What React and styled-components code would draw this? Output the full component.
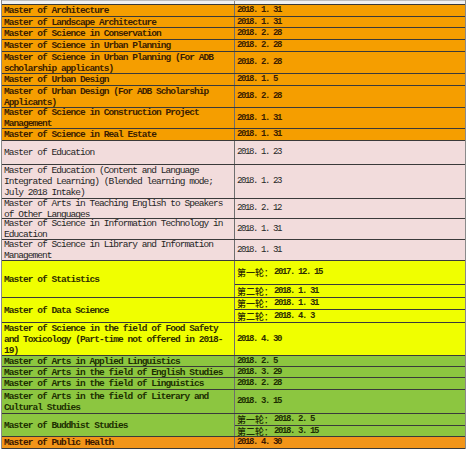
import React from "react"
import styled, { createGlobalStyle } from "styled-components"

const GlobalStyle = createGlobalStyle`
    body {
        margin: 0;
        background: #ffffff;
        font-family: "Liberation Mono", "Noto Sans CJK SC", monospace;
    }
`

const tones = {
    orange: { bg: "#f59e00", fg: "#3b1d00", weight: 700 },
    pink: { bg: "#f2dcdc", fg: "#262626", weight: 400 },
    yellow: { bg: "#f0ff00", fg: "#2e2e00", weight: 700 },
    green: { bg: "#8cc640", fg: "#1c2e00", weight: 700 },
    deep: { bg: "#f29519", fg: "#3b1800", weight: 700 },
}

const Sheet = styled.div`
    width: 463px;
    margin-left: 1px;
    border-left: 1px solid #8a8a8a;
    border-right: 1px solid #8a8a8a;
`
const TopStrip = styled.div`
    display: grid;
    grid-template-columns: 233px 1fr;
    height: 3px;
    background: #f1f1f1;
    border-top: 1px solid #bdbdbd;
    border-bottom: 1px solid #3a3a3a;
    span:first-child {
        border-right: 1px solid #8a8a8a;
    }
`
const Row = styled.div`
    display: grid;
    grid-template-columns: 233px 1fr;
    height: ${p => p.$h}px;
    box-sizing: border-box;
    border-bottom: 1px solid #3a3a3a;
    background: ${p => tones[p.$tone].bg};
    color: ${p => tones[p.$tone].fg};
    font-weight: ${p => tones[p.$tone].weight};
`
const NameCell = styled.div`
    display: flex;
    align-items: center;
    overflow: hidden;
    box-sizing: border-box;
    padding: 0 10px 0 2px;
    border-right: 1px solid #6e6e6e;
    font-size: 9.5px;
    line-height: 11px;
    letter-spacing: -0.95px;
`
const DateStack = styled.div`
    display: flex;
    flex-direction: column;
    min-height: 0;
`
const DateCell = styled.div`
    display: flex;
    align-items: center;
    flex: ${p => (p.$h ? `0 0 ${p.$h}px` : "1 1 auto")};
    box-sizing: border-box;
    overflow: hidden;
    padding-left: 2px;
    font-size: 9px;
    line-height: 11px;
    letter-spacing: -1.4px;
    white-space: nowrap;
    & + & {
        border-top: 1px solid #3a3a3a;
    }
`
const Round = styled.span`
    font-family: "Noto Sans CJK SC", sans-serif;
    font-size: 9px;
    font-weight: 500;
    letter-spacing: 0;
    margin-right: 1px;
`

const rows = [
    { tone: "orange", h: 12, name: "Master of Architecture", dates: [{ t: "2018. 1. 31" }] },
    { tone: "orange", h: 11, name: "Master of Landscape Architecture", dates: [{ t: "2018. 1. 31" }] },
    { tone: "orange", h: 12, name: "Master of Science in Conservation", dates: [{ t: "2018. 2. 28" }] },
    { tone: "orange", h: 12, name: "Master of Science in Urban Planning", dates: [{ t: "2018. 2. 28" }] },
    { tone: "orange", h: 22, name: "Master of Science in Urban Planning (For ADB scholarship applicants)", dates: [{ t: "2018. 2. 28" }] },
    { tone: "orange", h: 12, name: "Master of Urban Design", dates: [{ t: "2018. 1. 5" }] },
    { tone: "orange", h: 22, name: "Master of Urban Design (For ADB Scholarship Applicants)", dates: [{ t: "2018. 2. 28" }] },
    { tone: "orange", h: 21, name: "Master of Science in Construction Project Management", dates: [{ t: "2018. 1. 31" }] },
    { tone: "orange", h: 12, name: "Master of Science in Real Estate", dates: [{ t: "2018. 1. 31" }] },
    { tone: "pink", h: 24, name: "Master of Education", dates: [{ t: "2018. 1. 23" }] },
    { tone: "pink", h: 34, name: "Master of Education (Content and Language Integrated Learning) (Blended learning mode; July 2018 Intake)", dates: [{ t: "2018. 1. 23" }] },
    { tone: "pink", h: 20, name: "Master of Arts in Teaching English to Speakers of Other Languages", dates: [{ t: "2018. 2. 12" }] },
    { tone: "pink", h: 21, name: "Master of Science in Information Technology in Education", dates: [{ t: "2018. 1. 31" }] },
    { tone: "pink", h: 21, name: "Master of Science in Library and Information Management", dates: [{ t: "2018. 1. 31" }] },
    { tone: "yellow", h: 37, name: "Master of Statistics", dates: [{ r: "第一轮：", t: "2017. 12. 15", h: 23 }, { r: "第二轮：", t: "2018. 1. 31" }] },
    { tone: "yellow", h: 25, name: "Master of Data Science", dates: [{ r: "第一轮：", t: "2018. 1. 31", h: 11 }, { r: "第二轮：", t: "2018. 4. 3" }] },
    { tone: "yellow", h: 33, name: "Master of Science in the field of Food Safety and Toxicology (Part-time not offered in 2018-19)", dates: [{ t: "2018. 4. 30" }] },
    { tone: "green", h: 11, name: "Master of Arts in Applied Linguistics", dates: [{ t: "2018. 2. 5" }] },
    { tone: "green", h: 11, name: "Master of Arts in the field of English Studies", dates: [{ t: "2018. 3. 29" }] },
    { tone: "green", h: 12, name: "Master of Arts in the field of Linguistics", dates: [{ t: "2018. 2. 28" }] },
    { tone: "green", h: 24, name: "Master of Arts in the field of Literary and Cultural Studies", dates: [{ t: "2018. 3. 15" }] },
    { tone: "green", h: 23, name: "Master of Buddhist Studies", dates: [{ r: "第一轮：", t: "2018. 2. 5", h: 11 }, { r: "第二轮：", t: "2018. 3. 15" }] },
    { tone: "deep", h: 12, name: "Master of Public Health", dates: [{ t: "2018. 4. 30" }] },
]

const App = () => (
    <>
        <GlobalStyle />
        <Sheet>
            <TopStrip>
                <span />
                <span />
            </TopStrip>
            {rows.map((row, i) => (
                <Row key={i} $tone={row.tone} $h={row.h}>
                    <NameCell>
                        <span>{row.name}</span>
                    </NameCell>
                    <DateStack>
                        {row.dates.map((d, j) => (
                            <DateCell key={j} $h={d.h}>
                                {d.r && <Round>{d.r}</Round>}
                                {d.t}
                            </DateCell>
                        ))}
                    </DateStack>
                </Row>
            ))}
        </Sheet>
    </>
)

export default App
